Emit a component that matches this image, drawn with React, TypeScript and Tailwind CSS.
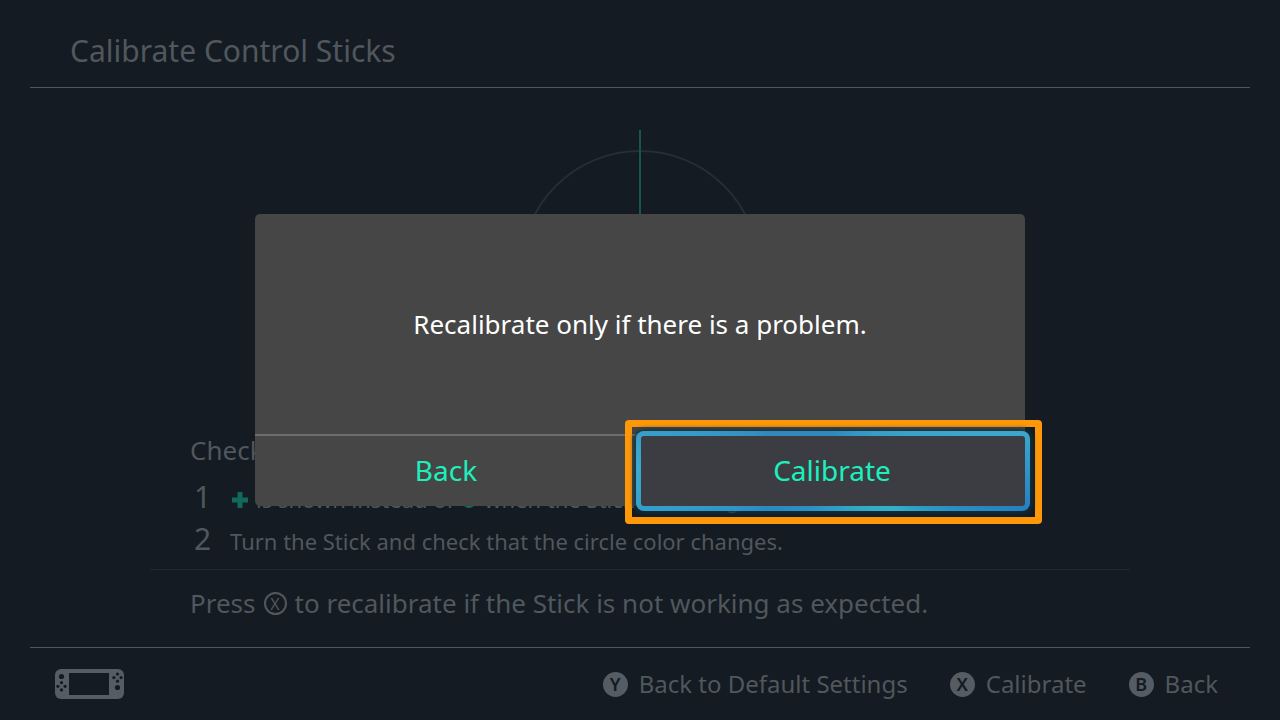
import { clsx } from 'clsx'

interface HintButtonProps {
  letter: string
  label: string
}

function HintButton({ letter, label }: HintButtonProps) {
  return (
    <button type="button" className="flex items-center gap-[11px] text-2xl">
      <span className="flex size-[25px] items-center justify-center rounded-full bg-[#555c63] text-lg font-semibold text-[#141b22]">
        {letter}
      </span>
      {label}
    </button>
  )
}

function StickGauge() {
  return (
    <svg width="280" height="280" viewBox="0 0 280 280" fill="none" className="mx-auto shrink-0">
      <circle cx="140" cy="140" r="119" stroke="#262d34" strokeWidth="2" />
      <path d="M140 0V280M0 140H280" stroke="#155550" strokeWidth="2" />
    </svg>
  )
}

function ConsoleIcon() {
  const dots = [
    [6.5, 13.7], [6.5, 20.9], [2.9, 17.3], [10.1, 17.3],
    [62.5, 5], [62.5, 12.2], [58.9, 8.6], [66.1, 8.6],
  ]
  return (
    <svg width="70" height="30" viewBox="0 0 70 30" aria-label="Handheld console">
      <rect width="69" height="30" rx="6" fill="#555c63" />
      <rect x="14" y="4" width="40" height="22" fill="#141b22" />
      <circle cx="6.5" cy="7.5" r="2.6" fill="#141b22" />
      <circle cx="62.5" cy="18.5" r="2.6" fill="#141b22" />
      {dots.map(([cx, cy]) => (
        <circle key={`${cx}-${cy}`} cx={cx} cy={cy} r="1.6" fill="#141b22" />
      ))}
    </svg>
  )
}

interface DialogButtonProps {
  label: string
  focused?: boolean
}

function DialogButton({ label, focused }: DialogButtonProps) {
  return (
    <button
      type="button"
      className={clsx('relative h-[70px] pr-0.5 pb-0.5 text-[28px] text-[#1cf0bd] focus:outline-none', focused && 'z-10')}
    >
      {focused && (
        <>
          <span className="absolute -top-4 -right-[17px] -bottom-[18px] -left-4 rounded-[4px] border-[7px] border-[#ff9808]" />
          <span className="absolute -inset-[5px] rounded-[8px] bg-[conic-gradient(#3189be_0deg,#3ba8cb_78deg,#2780c0_101deg,#35afc8_121deg,#2c88c0_240deg,#3aacd0_270deg,#3487bd_300deg,#3189be_360deg)] shadow-[0_0_5px_2px_#12323d]" />
          <span className="absolute inset-0 rounded-[3px] bg-[#3b3d43]" />
        </>
      )}
      <span className="relative">{label}</span>
    </button>
  )
}

export default function App() {
  return (
    <div className="relative flex min-h-screen flex-col bg-[#141b22] px-[30px] font-['Noto_Sans',sans-serif] text-[#50575d]">
      <header className="flex h-[88px] items-center border-b border-[#50565b] px-10 pt-3.5">
        <h1 className="text-[30px]">Calibrate Control Sticks</h1>
      </header>

      <main className="flex flex-1 flex-col pt-[42px]">
        <StickGauge />
        <div className="mx-[120px] mt-5 border-b border-[#20272e] px-10 pb-[9px]">
          <h2 className="text-[26px] leading-[40px]">Check the Stick.</h2>
          <ol className="mt-1.5 text-[22px] leading-[42px]">
            <li className="flex h-[42px] items-baseline">
              <span className="w-10 pl-1 text-[30px]">1</span>
              <span className="flex items-baseline gap-2">
                <svg width="18" height="16" viewBox="0 0 18 16">
                  <path d="M10 0V16M2 8H18" stroke="#106a5c" strokeWidth="5" />
                </svg>
                is shown instead of
                <svg width="14" height="14" viewBox="0 0 14 14">
                  <circle cx="7" cy="7" r="7" fill="#106a5c" />
                </svg>
                when the Stick is moving.
              </span>
            </li>
            <li className="flex h-[42px] items-baseline">
              <span className="w-10 pl-1 text-[30px]">2</span>
              Turn the Stick and check that the circle color changes.
            </li>
          </ol>
        </div>
        <p className="mx-40 mt-3.5 flex items-center gap-2 text-[26px]">
          Press
          <span className="flex size-[23px] items-center justify-center rounded-full border-2 border-[#50575d] text-base">
            X
          </span>
          to recalibrate if the Stick is not working as expected.
        </p>
      </main>

      <footer className="flex h-[73px] items-center border-t border-[#50565b] pr-8 pl-[25px]">
        <ConsoleIcon />
        <div className="ml-auto flex gap-[42px]">
          <HintButton letter="Y" label="Back to Default Settings" />
          <HintButton letter="X" label="Calibrate" />
          <HintButton letter="B" label="Back" />
        </div>
      </footer>

      <div className="absolute inset-0 flex items-center justify-center">
        <div role="dialog" aria-modal="true" className="w-[770px] rounded-[5px] bg-[#464646]">
          <p className="flex h-[222px] items-center justify-center border-b-2 border-[#6c6c6c] text-[26px] text-white">
            Recalibrate only if there is a problem.
          </p>
          <div className="grid grid-cols-2 gap-0.5">
            <DialogButton label="Back" />
            <DialogButton label="Calibrate" focused />
          </div>
        </div>
      </div>
    </div>
  )
}
